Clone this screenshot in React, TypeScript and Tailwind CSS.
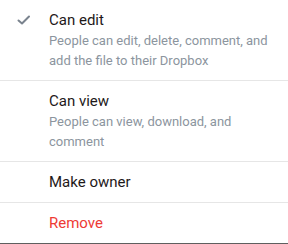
import React from 'react';

interface MenuItem {
  label: string;
  description?: string;
  checked?: boolean;
  danger?: boolean;
}

const items: MenuItem[] = [
  {
    label: 'Can edit',
    description: 'People can edit, delete, comment, and add the file to their Dropbox',
    checked: true,
  },
  {
    label: 'Can view',
    description: 'People can view, download, and comment',
  },
  { label: 'Make owner' },
  { label: 'Remove', danger: true },
];

function CheckIcon() {
  return (
    <svg width="14" height="12" viewBox="0 0 14 12" fill="none" className="mt-[5px]">
      <path d="M1.5 6.5 L5 9.5 L12 2.5" stroke="#7a838e" strokeWidth="2" strokeLinecap="round" strokeLinejoin="round" />
    </svg>
  );
}

export default function App() {
  return (
    <div className="w-[288px] h-[244px] bg-white border-b border-[#5f5f5f] font-['Roboto',sans-serif] flex flex-col">
      {items.map((item, i) => (
        <div
          key={item.label}
          className={`flex py-[9px] ${i < items.length - 1 ? 'border-b border-[#e6e6e6]' : ''}`}
        >
          <div className="w-[49px] flex justify-end pr-[18px] shrink-0">
            {item.checked && <CheckIcon />}
          </div>
          <div className="flex flex-col pr-4">
            <span
              className={`text-[15px] leading-[22px] ${item.danger ? 'text-[#ee3a35]' : 'text-[#1e1919]'}`}
            >
              {item.label}
            </span>
            {item.description && (
              <span className="text-[13px] leading-[20px] text-[#8c959e]">{item.description}</span>
            )}
          </div>
        </div>
      ))}
    </div>
  );
}
